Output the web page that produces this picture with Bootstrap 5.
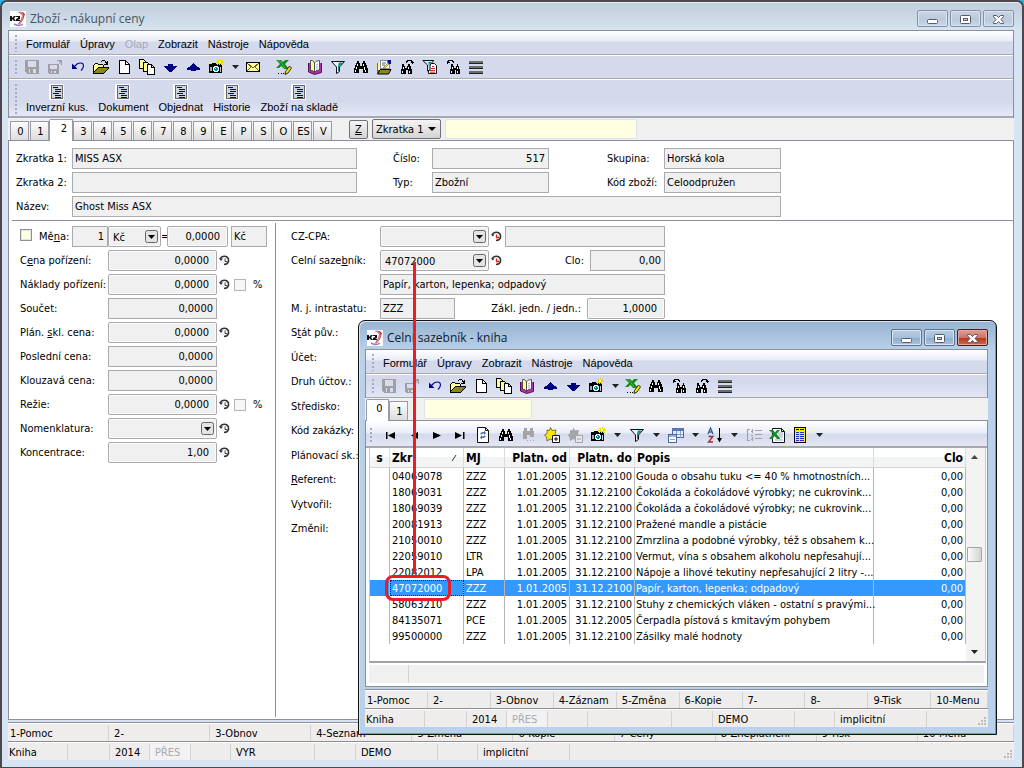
<!DOCTYPE html>
<html lang="cs">
<head>
<meta charset="utf-8">
<meta name="viewport" content="width=device-width, initial-scale=1">
<title>Zboží - nákupní ceny</title>
<link href="https://cdn.jsdelivr.net/npm/bootstrap@5.3.0/dist/css/bootstrap.min.css" rel="stylesheet">
<style>
:root{--ui:"DejaVu Sans Condensed","Noto Sans",sans-serif;--menu:"Liberation Sans",Arial,sans-serif;--cap:"Open Sans","Noto Sans",sans-serif;--bar:#d4d9ec;--line:#a9a9ad;--edge:#8e8e9a}
body{font:11px/14px var(--ui);color:#000;background:#21b4e8}
button,input,select{font:inherit;color:inherit}
.desk{min-height:100vh}
.win{border:1px solid #4d484d;border-radius:7px 7px 0 0}
.win-main{min-height:100vh;border-width:2px;border-bottom-width:1px;padding:0 8px 7px 6px;background:linear-gradient(#bfcddb 0,#d7e5f2 30px,#d7e5f2 100%);box-shadow:inset 0 1px #e8eef5}
.win-book{left:358px;top:320px;right:27px;bottom:33px;border-color:#111;background:linear-gradient(#98b4d1 0,#b9d1ea 30px,#b9d1ea 100%);box-shadow:inset 1px 1px #d4e6f5,inset -1px -1px #35b8d8;padding:0 8px 7px 6px}
.title-row{font:12px/16px var(--cap);height:28px;padding:6px 0 0 2px;color:#4a5560;gap:4px}
.win-book .title-row{color:#10202e}
.wbtns{gap:2px;margin-bottom:2px}
.wbtn{width:31px;height:17px;padding:0;border:1px solid #8391ab;border-radius:2px;background:linear-gradient(#c9d6e6,#bccbdb 50%,#b9c8da 51%,#c8d8e8);box-shadow:inset 0 0 0 1px #d9e4ef}
.win-book .wbtn{border-color:#5b7291;background:linear-gradient(#b8cce0,#a6bfda 50%,#8eacca 51%,#a9c4de)}
.win-book .wbtn.shut{border-color:#541a1a;background:linear-gradient(#dfa097,#cf7365 50%,#b5341d 51%,#cc6a50);box-shadow:inset 0 0 0 1px #e0a79c}
.wbtn svg{width:13px;height:11px;margin:2px auto 0}
.frame-in{border:1px solid var(--edge);border-bottom:0}
.mbar{height:24px;border-bottom:1px solid var(--line);background:linear-gradient(#fff 0,#e8ecf6 10px,var(--bar) 11px);font:11px/14px var(--menu);padding-left:6px}
.mbar a{color:#000;text-decoration:none;margin-left:10px;padding-top:2px}
.mbar a:first-of-type{margin-left:9px}
.mbar a.off{color:#a5a9b8}
.grip{width:2px;align-self:stretch;margin:4px 0 2px;background:repeating-linear-gradient(#a8adbd 0 2px,transparent 2px 4px);flex:none}
.tbar{height:24px;border-top:1px solid #fff;border-bottom:1px solid var(--line);background:var(--bar);padding-left:6px}
.tbar.soft{background:linear-gradient(var(--bar) 30%,#e1e6f5)}
.tbar.glass{border-top:0;border-bottom-width:2px;height:27px;background:linear-gradient(#fff,#e9edf7 12px,var(--bar) 13px,#e3e7f5);padding:3px 0 0 4px}
.tb{width:23px;height:20px;padding:0;border:0;background:none;flex:none}
.tb svg{width:16px;height:16px;display:block;margin:0 4px 0 3px}
.dd{width:14px}.glass .dd{width:16px}
.dd svg{width:7px;height:4px;margin:0 4px}
.bigbar{height:39px;border-top:1px solid #fff;border-bottom:2px solid #a7a7b5;background:linear-gradient(var(--bar) 60%,#e4e8f6);padding-left:6px}
.bigb{border:0;background:none;padding:2px 0 0;margin-left:10px;font:11px/14px var(--menu);text-align:center}
.bigb:first-of-type{margin-left:9px}
.bigb svg{width:16px;height:16px;display:block;margin:0 auto}
.strip{height:22px;background:#f0f0f0;padding-left:2px}
.tabb{width:19px;height:19px;border:1px solid #9a9aa6;border-bottom:0;background:linear-gradient(#fdfdfd,#dcdcdc);padding:2px 0 0 2px;margin-right:1px;line-height:14px}
.tabb.on{width:24px;height:22px;background:#fff;margin:0 0 -1px -1px;border-top-left-radius:2px;padding:0 0 3px 6px;z-index:1}
.strip-book .tabb.on{width:23px;padding-left:4px}
.zbtn{width:19px;height:19px;border:1px solid #707078;border-radius:2px;background:linear-gradient(#f4f4f4,#d4d4d4);padding:1px 0 0;line-height:14px}
.zsel{height:20px;width:69px;border:1px solid #707078;border-radius:2px;appearance:none;padding:2px 0 0 3px;background:url("data:image/svg+xml,%3Csvg xmlns='http://www.w3.org/2000/svg' width='8' height='4'%3E%3Cpath d='M0 0h8L4 4z'/%3E%3C/svg%3E") no-repeat right 4px center,linear-gradient(#f4f4f4,#d4d4d4)}
.find{height:20px;border:1px solid #dfe1ee;border-radius:2px;background:#ffffe1;padding:0 3px}
.sheet{background:#fff;border:1px solid var(--edge)}
.fld{height:21px;min-width:0;border:1px solid #a9abb0;background:#f0f0f0;padding:0 2px 1px;border-radius:0;display:block}
.fld.r{text-align:right;padding-right:3px}
.fld.in{border-radius:2px;box-shadow:inset 0 0 0 1px #fbfbfb}
.fld.in.r{padding-right:7px}
.fld.combo{appearance:none;padding:2px 2px 0 4px;background:#f0f0f0 url("data:image/svg+xml,%3Csvg xmlns='http://www.w3.org/2000/svg' width='13' height='13'%3E%3Crect x='.5' y='.5' width='12' height='12' rx='2' fill='%23e4e4e4' stroke='%23666'/%3E%3Cpath d='M3 5h7L6.500 9z'/%3E%3C/svg%3E") no-repeat right 2px center}
.head-form{display:grid;grid-template-columns:56px 285px 75px 117px 115px 117px;row-gap:3px;padding:7px 7px 3px;align-items:center}
.head-form .l2{padding-left:36px}.head-form .l3{padding-left:58px}
.rule{height:1px;background:var(--edge);margin:0 0 0 3px}
.cols{flex:1}
.colL{width:267px;border-right:1px solid var(--edge);margin:2px 0 2px;padding:3px 0 0 11px}
.fr{display:flex;align-items:center;height:21px;margin-bottom:3px}
.colL .fr>label:first-child{width:88px}
.w109{width:109px!important}
.clk{width:11px;height:11px;margin:0 2px;flex:none}
.cb{appearance:none;width:12px;height:12px;border:1px solid #b4b4b4;background:#f6f6f6;margin:0 7px 0 2px;flex:none}
.cb.lit{border-color:#8d9096;background:#ffffe1;box-shadow:inset 0 0 0 1px #e4e4e4;margin:0 7px 3px 0}
.colR{padding:5px 0 0 15px;flex:1}
.colR .fr>label:first-child{width:89px}
.colR .fr:nth-child(odd):nth-child(n+5){margin-bottom:4px}
.stat{background:#efecec;border-top:1px solid var(--edge);height:19px;box-shadow:inset 0 1px #fff;padding-top:2px}
.stat.first{margin-top:2px}
.stat>span{border-right:1px solid #d2d2d2;padding-left:5px;white-space:nowrap;flex:none;line-height:17px}
.stat>span:first-child{padding-left:1px}
.stat.keys>span{flex:0 0 10.05%}
.win-book .stat.keys>span{flex-basis:10.1%}
.stat.keys>span:last-child{flex:1 0 0!important}
.stat.keys>span:first-child{padding-left:2px}
.a40{width:40px}.a41{width:41px}.a42{width:42px}.a60{width:60px}.a84{width:84px}.a82{width:82px}.a92{width:92px}
.stat .off{color:#a9a9ae;background:#f2f2f2}
.sz{width:9px;height:9px;margin:auto 1px 1px auto}
.grid-box{margin:0 1px 0 3px;border:1px solid #c9c9cf;border-top:0;border-bottom:2px solid #a2a2aa;flex:1;background:#fff}
.book{width:100%;table-layout:fixed;border-collapse:separate;border-spacing:0}
.book th{height:20px;font-weight:700;font-size:12px;padding:2px 2px 0;line-height:17px;border-right:1px solid #dcdce0;background:linear-gradient(#fff 45%,#f3f4f6 50%);border-bottom:1px solid #d5d5d5;white-space:nowrap;overflow:hidden}
.book td{height:16px;line-height:14px;padding:2px 2px 0;border-right:1px solid #b5b5b5;white-space:nowrap}
.book td:nth-child(6){padding:2px 0 0 1px}
.book .sel td{background:#39f;color:#fff}
.book .sel td:nth-child(2){outline:1px dotted #222;outline-offset:-1px}
.num{text-align:right}
.sbar{width:19px;background:#f3f3f3;flex:none}
.sbar i{display:block;width:15px;height:15px;margin:0 2px 0 1px;border:1px solid #a5a5a5;border-radius:1px;background:linear-gradient(90deg,#fafafa,#d4d4d4)}
.sbar svg{width:7px;height:4px;margin:7px 6px 7px 5px}
.foot{height:18px;margin:2px 3px 3px;background:#f0f0f0}
.foot span{display:block;width:40px;height:18px;border-right:1px solid #d2d2d2}
.redline{left:413px;top:262px;width:3px;height:312px;background:#ed1c24}
.redbox{left:385px;top:575px;width:66px;height:26px;border:3px solid #ed1c24;border-radius:8px}
</style>
</head>
<body>
<svg width="0" height="0" class="position-absolute" aria-hidden="true">
<defs>
<symbol id="logo" viewBox="0 0 16 16"><path fill="#fff" d="M0 0h16v16H0z"/><path d="M7 1q6-1 8 2-1 5-4 9-2 2-3 1 4-5 4-9-2-3-5-3z" fill="#b03050"/><path d="M10 1q3 1 3 4-1 6-5 10" fill="none" stroke="#e8a47c"/><path d="M4 13q5 3 9 0" fill="none" stroke="#9c7abc" stroke-width="1.500"/><path d="M0 5h2v2l2-2h2L4 7.500 6 10H4L2 8v2H0zM6 5h4v3l-2 1h2v1H6V8l2-1V6H6z" fill="#111"/></symbol>
<symbol id="save" viewBox="0 0 16 16" shape-rendering="crispEdges"><path d="M1 1h14v14H3l-2-2z" fill="#a0a0a4"/><path d="M4 2h8v6H4zM5 10h7v4H5z" fill="#d8dced"/><path d="M6 10h3v4H6zM13 2h1v1h-1z" fill="#a0a0a4"/></symbol>
<symbol id="saveas" viewBox="0 0 16 16" shape-rendering="crispEdges"><path d="M1 5h11v10H2l-1-1z" fill="#a0a0a4"/><path d="M3 6h7v4H3zM4 12h5v2H4z" fill="#d8dced"/><path d="M5 12h2v2H5z" fill="#a0a0a4"/><path d="M10 1h5v5h-1V4h-1v1h-1v1h-1V5h1V4h1V3h-1V2h-2z" fill="#a0a0a4"/></symbol>
<symbol id="undo" viewBox="0 0 16 16"><path d="M3.500 8.500L7 5q4-2 6 0 1.500 3-2 6.500" fill="none" stroke="#000090" stroke-width="1.100"/><path d="M2 4.500V10h5.500z" fill="#000090"/></symbol>
<symbol id="open" viewBox="0 0 16 16" shape-rendering="crispEdges"><path d="M1 6h1V5h3v1h5v3H5l-4 5z" fill="#ff9"/><path d="M5 9h10l-4 5H1z" fill="#8a8812"/><path d="M1 5h1V4h3v1h5v1h1v2h-1V6H5V5H2v1H1zM0 6h1v6H0zM5 8h11v1H5zM4 9h1v1H4zM3 10h1v1H3zM2 11h1v1H2zM1 12h1v1H1zM0 12h1v3H0zM1 14h10v1H1zM15 9h1v1h-1zM14 10h1v1h-1zM13 11h1v1h-1zM12 12h1v1h-1zM11 13h1v1h-1zM8 2h1v1H8zM9 1h3v1H9zM12 2h1v1h-1zM14 2h1v4h-4V5h2V4h-1V3h2z"/></symbol>
<symbol id="new" viewBox="0 0 16 16" shape-rendering="crispEdges"><path d="M3.500 1.500h6l4 4v9h-10z" fill="#fff" stroke="#000"/><path d="M9.500 1.500v4h4" fill="none" stroke="#000"/></symbol>
<symbol id="copies" viewBox="0 0 16 16" shape-rendering="crispEdges"><g stroke="#000"><path d="M.500.500h4l3 3v6h-7z" fill="#ff9"/><path d="M4.500 3.500h4l3 3v6h-7z" fill="#ff9"/><path d="M8.500 5.500h4l3 3v7h-7z" fill="#fff"/><path d="M12.500 5.500v3h3" fill="none"/></g></symbol>
<symbol id="down" viewBox="0 0 16 16" shape-rendering="crispEdges"><path d="M6 5h5v2h4v1h-1v1h-1v1h-1v1h-1v1h-1v1H7v-1H6v-1H5v-1H4V9H3V8H2V7h4z" fill="#000080"/></symbol>
<symbol id="up" viewBox="0 0 16 16" shape-rendering="crispEdges"><path d="M8 4h1v1h1v1h1v1h1v1h2v1h1v2h-4v1H6v-1H2V9h1V8h2V7h1V6h1V5h1z" fill="#000080"/></symbol>
<symbol id="camera" viewBox="0 0 16 16" shape-rendering="crispEdges"><path d="M1 5h3V4h4v1h6v9H1z"/><path d="M2 8h2v4H2z" fill="#a8a8b0"/><path d="M12 8h1v5h-1z" fill="#ccc"/><path d="M6 7h4v1h1v4h-1v1H6v-1H5V8h1z" fill="#dff"/><path d="M7 8h2v1h1v2H9v1H7v-1H6V9h1z" fill="#088"/><path d="M7 9h1v1H7z" fill="#fff"/><path d="M12 0h1v2l2-1v1l-1 1h2v1h-2l1 2h-1l-2-1v1h-1V5L9 6V5l1-1H8V3h2L9 1l3 1z" fill="#e8d800"/><path d="M11 2h2v2h-2z" fill="#ffa"/></symbol>
<symbol id="caret" viewBox="0 0 7 4"><path d="M0 0h7L3.500 4z" fill="#222"/></symbol>
<symbol id="mail" viewBox="0 0 16 16" shape-rendering="crispEdges"><path d="M1.500 3.500h13v9h-13z" fill="#ff9" stroke="#000"/><path d="M2 4l6 5 6-5M2 12l4-4m4 0l4 4" fill="none" stroke="#665f20"/></symbol>
<symbol id="xls" viewBox="0 0 16 16"><path d="M0 1h5l2 2 2-2h4L9 5l4 5H8L5.500 7 3 9H0l4-4z" fill="#138a1c"/><path d="M1 2h3l5 7" fill="none" stroke="#5fc85f" stroke-width=".7"/><path d="M13.500 7l2 2-3.500 5-3 1.500.5-3z" fill="#f4e400" stroke="#000" stroke-width=".8"/><path d="M2 14h1v1H2zm3 0h1v1H5zm2 0h1v1H7z"/></symbol>
<symbol id="bookico" viewBox="0 0 16 16"><path d="M1.500 4v9l6 2.500 7-2V4" fill="#b030b0" stroke="#600860"/><path d="M3.500 1.500h2l2 2.500v9.500l-2-2h-2z" fill="#ff9" stroke="#333" stroke-width=".8"/><path d="M7.500 4q1-2.500 5-2.500v9.500q-4 0-5 2.500z" fill="#fff" stroke="#333" stroke-width=".8"/><path d="M9 6l2-1M9 8l2-1M9 10l2-1" stroke="#888" stroke-width=".7"/></symbol>
<symbol id="filter" viewBox="0 0 16 16"><path d="M1.500 2.500h13L9.500 8v4.500l-3 2V8z" fill="#e6f4f4" stroke="#111"/><path d="M9 3.500h4L9 7.500V12H8V7z" fill="#0b8a8a"/></symbol>
<symbol id="bin" viewBox="0 0 16 16" shape-rendering="crispEdges"><path d="M4 2h2v2h1v3h2V4h1V2h2v2h1v2h1v3h1v5h-5v-4H6v4H1V9h1V6h1V4h1z"/><path d="M4 5h1v2H4zM3 8h1v2H3zM2 11h1v2H2zM10 5h1v2h-1zM11 8h1v3h-1zM12 11h1v2h-1z" fill="#fff"/></symbol>
<symbol id="binoff" viewBox="0 0 16 16" shape-rendering="crispEdges"><path d="M3 1h3v3h3V1h3v3h1v6H9V8H6v4H2V4h1zM6 13h1v1H6zm3 0h1v1H9zm3 0h1v1h-1z" fill="#a4a4a8"/></symbol>
<symbol id="binnext" viewBox="0 0 16 16" shape-rendering="crispEdges"><path d="M3 5h2v2h1v2h2V7h1V5h2v2h1v3h1v5H9v-4H7v4H2v-5h1z"/><path d="M4 8h1v2H4zM3 12h1v2H3zM9 8h1v2H9zM10 12h1v2h-1z" fill="#fff"/><path d="M7.500 3.500v-1h1v-1h4v1h1v2m-2-1h3" fill="none" stroke="#000"/></symbol>
<symbol id="binprev" viewBox="0 0 16 16" shape-rendering="crispEdges"><path d="M6 5h2v2h1v2h2V7h1V5h1v2h1v3h1v5h-4v-4h-1v4H5v-5h1z"/><path d="M7 8h1v2H7zM6 12h1v2H6zM12 8h1v2h-1zM12 12h1v2h-1z" fill="#fff"/><path d="M8.500 3.500v-1h-1v-1h-4v1h-1v2m-1-1h3" fill="none" stroke="#000"/></symbol>
<symbol id="notes" viewBox="0 0 16 16"><path d="M2 4v10" fill="none" stroke="#000"/><path d="M4.500 1.500h9v8h-9z" fill="#fff" stroke="#333" stroke-dasharray="1 1"/><path d="M1.500 15l2.500-4.500h11L12.500 15z" fill="#8a8812" stroke="#000"/><path d="M2 4h2v7H2z" fill="#ff7"/><path d="M6 4h4M6 6h3" stroke="#36a"/><path d="M7 9l5-5 1 1-4 4z" fill="#f4e400" stroke="#552" stroke-width=".5"/><path d="M12 1h3v4h-2l-2-2z" fill="#0a0a9a"/></symbol>
<symbol id="filterdoc" viewBox="0 0 16 16"><path d="M8.500 4.500h4l2 2v8h-8v-5z" fill="#fff" stroke="#111"/><path d="M9 9.500h4M8 11.500h5M8 13.200h5M10 7.500h2" stroke="#d22"/><path d="M.800 1.500h11L8 6v5l-2.500 1V6z" fill="#cfeeee" stroke="#111"/><path d="M6.500 3h3.500L7 6v4z" fill="#0b8a8a"/></symbol>
<symbol id="lines" viewBox="0 0 16 16" shape-rendering="crispEdges"><path d="M1 2h14v2H1zM1 7h14v2H1zM1 12h14v2H1z" fill="#6c6c6c"/><path d="M1 4h14v1H1zM1 9h14v1H1zM1 14h14v1H1z" fill="#222"/></symbol>
<symbol id="listdoc" viewBox="0 0 16 16" shape-rendering="crispEdges"><path d="M0 0h15v16H0z" fill="#fff"/><path d="M2.500 1.500h11v13h-11z" fill="#d0d4dc" stroke="#666"/><path d="M4 3h5v1H4zM6 5h6v1H6zM6 7h6v1H6zM4 9h6v1H4zM6 11h6v1H6zM6 13h6v1H6z" fill="#000080"/></symbol>
<symbol id="first" viewBox="0 0 16 16"><path d="M3 5h1.500v7H3zM12 5v7L5 8.500z"/></symbol>
<symbol id="prev" viewBox="0 0 16 16"><path d="M12 5v7L5 8.500z"/></symbol>
<symbol id="play" viewBox="0 0 16 16"><path d="M4 5v7l8-3.500z"/></symbol>
<symbol id="last" viewBox="0 0 16 16"><path d="M3 5v7l7-3.500zM11 5h1.500v7H11z"/></symbol>
<symbol id="refresh" viewBox="0 0 16 16"><path d="M2.500.500h8l3 3v12h-11z" fill="#fff" stroke="#111"/><path d="M10.500.500v3h3" fill="none" stroke="#111"/><path d="M5 7q1-2.500 4-2l0-1.500 2 2.500-2 2V6.500q-2 0-2.500 1zM11 9q-1 2.500-4 2V12.500L5 10.500 7 8v1.500q2 0 2.500-1z" fill="#4a6ea0"/></symbol>
<symbol id="star" viewBox="0 0 16 16"><path d="M6.500.5l1.500 3 4-.5-1 4 1 3-3 3-3-1-3 2-.5-4-2-2 2.500-1.500L3 3l2.500.5z" fill="#ffe800" stroke="#554" stroke-width=".8"/><path d="M8.500 8.500h7v7h-7z" fill="#fff" stroke="#111"/><path d="M10 12h4M12 10v4" stroke="#111"/></symbol>
<symbol id="staroff" viewBox="0 0 16 16"><path d="M6.500.5l1.500 3 4-.5-1 4 1 3-3 3-3-1-3 2-.5-4-2-2 2.500-1.500L3 3l2.500.5z" fill="#a4a4a8"/><path d="M8.500 8.500h7v7h-7z" fill="#e6e8f0" stroke="#a4a4a8"/><path d="M10 12h4" stroke="#a4a4a8"/></symbol>
<symbol id="forms" viewBox="0 0 16 16" shape-rendering="crispEdges"><path d="M4.500 1.500h11v9h-11z" fill="#e4ecfa" stroke="#4a66a0"/><path d="M4 1h12v3H4z" fill="#5878b4"/><path d="M8 4v7M12 4v7M5 7h10" stroke="#8aa0cc"/><path d="M.500 7.500h8v8h-8z" fill="#fff" stroke="#4a66a0"/><path d="M1 8h7v2H1z" fill="#9ab0d8"/><path d="M2 12.500h5" stroke="#8aa0cc"/></symbol>
<symbol id="az" viewBox="0 0 16 16"><path d="M1 7l2.500-6L6 7M2 5h3" fill="none" stroke="#2f5f9f" stroke-width="1.300"/><path d="M1.500 9.500H6L1.500 15H6" fill="none" stroke="#9c2f2f" stroke-width="1.300"/><path d="M12.500 1v12" stroke="#000"/><path d="M10 11h5l-2.500 4.500z"/></symbol>
<symbol id="tree" viewBox="0 0 16 16"><path d="M4 2.500H1.500v11H4M5 4.500h2M5 8.500h2M5 12.500h2M9 3.500h7M9 7.500h7M9 11.500h7M6.500 2v4M6.500 10v4" fill="none" stroke="#a4a4a8" stroke-width="1.200"/></symbol>
<symbol id="xlsdoc" viewBox="0 0 16 16"><path d="M3.500 1.500h9l3 3v11h-12z" fill="#fff" stroke="#111"/><path d="M12.500 1.500v3h3" fill="none" stroke="#111"/><path d="M9 6h5M9 8h5M9 10h5M6 13h8" stroke="#9ab"/><path d="M0 3h4l2 2.500L8 3h3L7.500 7l4 5H8L5.500 9 3.500 12H0l4-5z" fill="#178a2a"/></symbol>
<symbol id="ylist" viewBox="0 0 16 16" shape-rendering="crispEdges"><path d="M2.500.500h11v15h-11z" fill="#ffee10" stroke="#000"/><path d="M4 2h3v1H4zM8 2h4v1H8z"/><path d="M4 5h3v1H4zM4 7h3v1H4zM4 9h3v1H4zM4 11h3v1H4zM4 13h3v1H4zM8 5h4v1H8zM8 7h4v1H8zM8 9h4v1H8zM8 11h4v1H8zM8 13h4v1H8z" fill="#2030c0"/></symbol>
<symbol id="clock" viewBox="0 0 11 11"><path d="M1 4q2-3.500 6-2.500 3 1 2.500 5-1 3-4.500 3" fill="none" stroke="#333" stroke-width="1.500"/><path d="M0 3.500h4L2 6z" fill="#333"/><path d="M6 3.500v3h2.500" fill="none" stroke="#444"/></symbol>
<symbol id="clockred" viewBox="0 0 11 11"><path d="M1 4q2-3.500 6-2.500 3 1 2.500 5-1 3-4.500 3" fill="none" stroke="#333" stroke-width="1.500"/><path d="M0 3.500h3.500L2 5.500z" fill="#333"/><path d="M5.500 3.500v3h3" fill="none" stroke="#e02020" stroke-width="1.300"/></symbol>
<symbol id="wmin" viewBox="0 0 13 11"><rect x="1.500" y="5.500" width="10" height="4" rx="1" fill="#fff" stroke="#555a6c"/></symbol>
<symbol id="wmax" viewBox="0 0 13 11"><rect x="1.500" y="1.500" width="10" height="8" rx="1" fill="#fff" stroke="#555a6c"/><rect x="4.500" y="4.500" width="4" height="2" fill="#cfd8e4" stroke="#555a6c"/></symbol>
<symbol id="wx" viewBox="0 0 13 11"><path d="M1.500 1.500h3l2 2 2-2h3v1.200L9 5.500l2.500 2.800v1.200h-3l-2-2-2 2h-3V8.300L4 5.500 1.500 2.700z" fill="#fff" stroke="#555a6c"/></symbol>
<symbol id="arup" viewBox="0 0 7 4"><path d="M0 4h7L3.500 0z" fill="#444"/></symbol>
<symbol id="sizer" viewBox="0 0 9 9" shape-rendering="crispEdges"><path d="M6 0h2v2H6zM6 3h2v2H6zM3 3h2v2H3zM0 6h2v2H0zM3 6h2v2H3zM6 6h2v2H6z" fill="#c0bcbc"/></symbol>
</defs>
</svg>
<main class="desk position-relative">
<section class="win win-main d-flex flex-column" aria-label="Zboží">
  <header class="title-row d-flex align-items-center">
    <svg width="16" height="16"><use href="#logo"/></svg><span class="flex-grow-1">Zboží - nákupní ceny</span>
    <div class="wbtns d-flex">
      <button class="wbtn" aria-label="Minimalizovat"><svg class="d-block"><use href="#wmin"/></svg></button>
      <button class="wbtn" aria-label="Maximalizovat"><svg class="d-block"><use href="#wmax"/></svg></button>
      <button class="wbtn" aria-label="Zavřít"><svg class="d-block"><use href="#wx"/></svg></button>
    </div>
  </header>
  <div class="frame-in">
    <nav class="mbar d-flex align-items-center"><span class="grip"></span><a href="#">Formulář</a><a href="#">Úpravy</a><a href="#" class="off">Olap</a><a href="#">Zobrazit</a><a href="#">Nástroje</a><a href="#">Nápověda</a></nav>
    <div class="tbar d-flex align-items-center"><span class="grip me-1"></span>
      <button class="tb"><svg><use href="#save"/></svg></button><button class="tb"><svg><use href="#saveas"/></svg></button><button class="tb"><svg><use href="#undo"/></svg></button><button class="tb"><svg><use href="#open"/></svg></button><button class="tb"><svg><use href="#new"/></svg></button><button class="tb"><svg><use href="#copies"/></svg></button><button class="tb"><svg><use href="#down"/></svg></button><button class="tb"><svg><use href="#up"/></svg></button><button class="tb"><svg><use href="#camera"/></svg></button><button class="tb dd"><svg><use href="#caret"/></svg></button><button class="tb me-2"><svg><use href="#mail"/></svg></button><button class="tb me-2"><svg><use href="#xls"/></svg></button><button class="tb"><svg><use href="#bookico"/></svg></button><button class="tb"><svg><use href="#filter"/></svg></button><button class="tb"><svg><use href="#bin"/></svg></button><button class="tb"><svg><use href="#notes"/></svg></button><button class="tb"><svg><use href="#binnext"/></svg></button><button class="tb"><svg><use href="#filterdoc"/></svg></button><button class="tb"><svg><use href="#binprev"/></svg></button><button class="tb"><svg><use href="#lines"/></svg></button>
    </div>
    <div class="bigbar d-flex align-items-center"><span class="grip"></span>
      <button class="bigb"><svg><use href="#listdoc"/></svg>Inverzní kus.</button><button class="bigb"><svg><use href="#listdoc"/></svg>Dokument</button><button class="bigb"><svg><use href="#listdoc"/></svg>Objednat</button><button class="bigb"><svg><use href="#listdoc"/></svg>Historie</button><button class="bigb"><svg><use href="#listdoc"/></svg>Zboží na skladě</button>
    </div>
  </div>
  <div class="strip d-flex align-items-end">
    <button class="tabb">0</button><button class="tabb">1</button><button class="tabb on">2</button><button class="tabb">3</button><button class="tabb">4</button><button class="tabb">5</button><button class="tabb">6</button><button class="tabb">7</button><button class="tabb">8</button><button class="tabb">9</button><button class="tabb">E</button><button class="tabb">P</button><button class="tabb">S</button><button class="tabb">O</button><button class="tabb">ES</button><button class="tabb">V</button>
    <div class="d-flex align-items-center align-self-center ms-3"><button class="zbtn me-1"><u>Z</u></button><select class="zsel me-1" aria-label="Klíč"><option>Zkratka 1</option></select><input class="find" style="width:192px" aria-label="Hledat"></div>
  </div>
  <div class="sheet flex-grow-1 d-flex flex-column">
    <div class="head-form">
      <label for="z1">Zkratka 1:</label><input id="z1" class="fld" value="MISS ASX" readonly><label for="ci" class="l2">Číslo:</label><input id="ci" class="fld r" value="517" readonly><label for="sk" class="l3">Skupina:</label><input id="sk" class="fld" value="Horská kola" readonly>
      <label for="z2">Zkratka 2:</label><input id="z2" class="fld" readonly><label for="ty" class="l2">Typ:</label><input id="ty" class="fld" value="Zbožní" readonly><label for="kz" class="l3">Kód zboží:</label><input id="kz" class="fld" value="Celoodpružen" readonly>
      <label for="nz">Název:</label><input id="nz" class="fld" style="grid-column:2/-1" value="Ghost Miss ASX" readonly>
    </div>
    <div class="rule"></div>
    <div class="cols d-flex">
      <div class="colL">
        <div class="fr"><input type="checkbox" class="cb lit" id="me"><label for="me" style="width:33px">Mě<u>n</u>a:</label><input class="fld r" style="width:36px" value="1" aria-label="Množství"><select class="fld in combo" style="width:53px" aria-label="Měna"><option>Kč</option></select><span class="text-center" style="width:6px">=</span><input class="fld in r" style="width:61px" value="0,0000" aria-label="Kurz"><input class="fld" style="width:36px;margin-left:3px" value="Kč" aria-label="Měna kurzu"></div>
        <div class="fr"><label for="l1">C<u>e</u>na pořízení:</label><input id="l1" class="fld in r w109" value="0,0000"><svg class="clk"><use href="#clock"/></svg></div>
        <div class="fr"><label for="l2">Náklady pořízení:</label><input id="l2" class="fld in r w109" value="0,0000"><svg class="clk"><use href="#clock"/></svg><input type="checkbox" class="cb" id="p1"><label for="p1">%</label></div>
        <div class="fr"><label for="l3">Součet:</label><input id="l3" class="fld r w109" value="0,0000"></div>
        <div class="fr"><label for="l4">Plán. <u>s</u>kl. cena:</label><input id="l4" class="fld in r w109" value="0,0000"><svg class="clk"><use href="#clock"/></svg></div>
        <div class="fr"><label for="l5">Poslední cena:</label><input id="l5" class="fld r w109" value="0,0000"></div>
        <div class="fr"><label for="l6">Klouzavá cena:</label><input id="l6" class="fld r w109" value="0,0000"></div>
        <div class="fr"><label for="l7">Režie:</label><input id="l7" class="fld in r w109" value="0,0000"><svg class="clk"><use href="#clock"/></svg><input type="checkbox" class="cb" id="p2"><label for="p2">%</label></div>
        <div class="fr"><label for="l8">Nomenklatura:</label><select id="l8" class="fld in combo w109"><option></option></select><svg class="clk"><use href="#clock"/></svg></div>
        <div class="fr"><label for="l9">Koncentrace:</label><input id="l9" class="fld in r w109" value="1,00"><svg class="clk"><use href="#clock"/></svg></div>
      </div>
      <div class="colR">
        <div class="fr"><label for="r1">CZ-CPA:</label><select id="r1" class="fld in combo w109"><option></option></select><svg class="clk"><use href="#clockred"/></svg><input class="fld" style="width:160px;margin-left:1px" aria-label="Popis CZ-CPA" readonly></div>
        <div class="fr"><label for="r2">Celní saze<u>b</u>ník:</label><select id="r2" class="fld in combo w109"><option>47072000</option></select><svg class="clk"><use href="#clockred"/></svg><label for="clo" class="text-end" style="width:86px;padding-right:6px">Clo:</label><input id="clo" class="fld r" style="width:75px" value="0,00" readonly></div>
        <div class="fr"><label for="r3"></label><input id="r3" class="fld" style="width:285px" value="Papír, karton, lepenka; odpadový" aria-label="Popis sazebníku" readonly></div>
        <div class="fr"><label for="r4">M. j. intrastatu:</label><input id="r4" class="fld" style="width:75px" value="ZZZ" readonly><label for="r5" class="text-end" style="width:132px;padding-right:6px">Zákl. jedn. / jedn.:</label><input id="r5" class="fld in r" style="width:78px" value="1,0000"></div>
        <div class="fr"><span>S<u>t</u>át pův.:</span></div>
        <div class="fr"><span>Účet:</span></div>
        <div class="fr"><span>Druh účtov.:</span></div>
        <div class="fr"><span>Středisko:</span></div>
        <div class="fr"><span>Kód zakázky:</span></div>
        <div class="fr"><span>Plánovací sk.:</span></div>
        <div class="fr"><span><u>R</u>eferent:</span></div>
        <div class="fr"><span>Vytvořil:</span></div>
        <div class="fr"><span>Změnil:</span></div>
      </div>
    </div>
  </div>
  <div class="stat first keys d-flex"><span>1-Pomoc</span><span>2-</span><span>3-Obnov</span><span>4-Seznam</span><span>5-Změna</span><span>6-Kopie</span><span>7-Ceny</span><span>8-Zneplatnění</span><span>9-Tisk</span><span>10-Menu</span></div>
  <div class="stat d-flex"><span class="a60">Kniha</span><span class="a42"></span><span class="a40">2014</span><span class="a41 off">PŘES</span><span class="a40"></span><span class="a84">VYR</span><span class="a41"></span><span class="a82">DEMO</span><span class="a40"></span><span class="a92">implicitní</span><svg class="sz"><use href="#sizer"/></svg></div>
</section>

<section class="win win-book position-absolute d-flex flex-column" aria-label="Celní sazebník">
  <header class="title-row d-flex align-items-center">
    <svg width="16" height="16"><use href="#logo"/></svg><span class="flex-grow-1">Celní sazebník - kniha</span>
    <div class="wbtns d-flex">
      <button class="wbtn" aria-label="Minimalizovat"><svg class="d-block"><use href="#wmin"/></svg></button>
      <button class="wbtn" aria-label="Maximalizovat"><svg class="d-block"><use href="#wmax"/></svg></button>
      <button class="wbtn shut" aria-label="Zavřít"><svg class="d-block"><use href="#wx"/></svg></button>
    </div>
  </header>
  <div class="frame-in">
    <nav class="mbar d-flex align-items-center"><span class="grip"></span><a href="#">Formulář</a><a href="#">Úpravy</a><a href="#">Zobrazit</a><a href="#">Nástroje</a><a href="#">Nápověda</a></nav>
    <div class="tbar soft d-flex align-items-center"><span class="grip me-1"></span>
      <button class="tb"><svg><use href="#save"/></svg></button><button class="tb"><svg><use href="#saveas"/></svg></button><button class="tb"><svg><use href="#undo"/></svg></button><button class="tb"><svg><use href="#open"/></svg></button><button class="tb"><svg><use href="#new"/></svg></button><button class="tb"><svg><use href="#copies"/></svg></button><button class="tb"><svg><use href="#bookico"/></svg></button><button class="tb"><svg><use href="#up"/></svg></button><button class="tb"><svg><use href="#down"/></svg></button><button class="tb"><svg><use href="#camera"/></svg></button><button class="tb dd"><svg><use href="#caret"/></svg></button><button class="tb"><svg><use href="#xls"/></svg></button><button class="tb"><svg><use href="#bin"/></svg></button><button class="tb"><svg><use href="#binprev"/></svg></button><button class="tb"><svg><use href="#binnext"/></svg></button><button class="tb"><svg><use href="#lines"/></svg></button>
    </div>
  </div>
  <div class="strip strip-book d-flex align-items-end">
    <button class="tabb on">0</button><button class="tabb">1</button><input class="find align-self-center" style="width:108px;margin-left:15px" aria-label="Hledat v knize">
  </div>
  <div class="sheet flex-grow-1 d-flex flex-column">
    <div class="tbar glass d-flex align-items-center"><span class="grip me-2"></span>
      <button class="tb"><svg><use href="#first"/></svg></button><button class="tb"><svg><use href="#prev"/></svg></button><button class="tb"><svg><use href="#play"/></svg></button><button class="tb"><svg><use href="#last"/></svg></button><button class="tb"><svg><use href="#refresh"/></svg></button><button class="tb"><svg><use href="#bin"/></svg></button><button class="tb"><svg><use href="#binoff"/></svg></button><button class="tb"><svg><use href="#star"/></svg></button><button class="tb"><svg><use href="#staroff"/></svg></button><button class="tb"><svg><use href="#camera"/></svg></button><button class="tb dd"><svg><use href="#caret"/></svg></button><button class="tb"><svg><use href="#filter"/></svg></button><button class="tb dd"><svg><use href="#caret"/></svg></button><button class="tb"><svg><use href="#forms"/></svg></button><button class="tb dd"><svg><use href="#caret"/></svg></button><button class="tb"><svg><use href="#az"/></svg></button><button class="tb dd"><svg><use href="#caret"/></svg></button><button class="tb"><svg><use href="#tree"/></svg></button><button class="tb"><svg><use href="#xlsdoc"/></svg></button><button class="tb"><svg><use href="#ylist"/></svg></button><button class="tb dd"><svg><use href="#caret"/></svg></button>
    </div>
    <div class="grid-box d-flex">
      <div class="flex-grow-1">
      <table class="book">
        <colgroup><col style="width:20px"><col style="width:74px"><col style="width:41px"><col style="width:65px"><col style="width:65px"><col><col style="width:92px"></colgroup>
        <thead><tr><th class="text-center">s</th><th><span class="d-flex justify-content-between">Zkr<svg width="6" height="8" class="mt-1 me-1"><path d="M1 7l4-6" stroke="#333"/></svg></span></th><th>MJ</th><th class="num">Platn. od</th><th class="num">Platn. do</th><th>Popis</th><th class="num">Clo</th></tr></thead>
        <tbody>
        <tr><td></td><td>04069078</td><td>ZZZ</td><td class="num">1.01.2005</td><td class="num">31.12.2100</td><td>Gouda o obsahu tuku &lt;= 40 % hmotnostních...</td><td class="num">0,00</td></tr>
        <tr><td></td><td>18069031</td><td>ZZZ</td><td class="num">1.01.2005</td><td class="num">31.12.2100</td><td>Čokoláda a čokoládové výrobky; ne cukrovink...</td><td class="num">0,00</td></tr>
        <tr><td></td><td>18069039</td><td>ZZZ</td><td class="num">1.01.2005</td><td class="num">31.12.2100</td><td>Čokoláda a čokoládové výrobky; ne cukrovink...</td><td class="num">0,00</td></tr>
        <tr><td></td><td>20081913</td><td>ZZZ</td><td class="num">1.01.2005</td><td class="num">31.12.2100</td><td>Pražené mandle a pistácie</td><td class="num">0,00</td></tr>
        <tr><td></td><td>21050010</td><td>ZZZ</td><td class="num">1.01.2005</td><td class="num">31.12.2100</td><td>Zmrzlina a podobné výrobky, též s obsahem k...</td><td class="num">0,00</td></tr>
        <tr><td></td><td>22059010</td><td>LTR</td><td class="num">1.01.2005</td><td class="num">31.12.2100</td><td>Vermut, vína s obsahem alkoholu nepřesahují...</td><td class="num">0,00</td></tr>
        <tr><td></td><td>22082012</td><td>LPA</td><td class="num">1.01.2005</td><td class="num">31.12.2100</td><td>Nápoje a lihové tekutiny nepřesahující 2 litry -...</td><td class="num">0,00</td></tr>
        <tr class="sel"><td></td><td>47072000</td><td>ZZZ</td><td class="num">1.01.2005</td><td class="num">31.12.2100</td><td>Papír, karton, lepenka; odpadový</td><td class="num">0,00</td></tr>
        <tr><td></td><td>58063210</td><td>ZZZ</td><td class="num">1.01.2005</td><td class="num">31.12.2100</td><td>Stuhy z chemických vláken - ostatní s pravými...</td><td class="num">0,00</td></tr>
        <tr><td></td><td>84135071</td><td>PCE</td><td class="num">1.01.2005</td><td class="num">31.12.2005</td><td>Čerpadla pístová s kmitavým pohybem</td><td class="num">0,00</td></tr>
        <tr><td></td><td>99500000</td><td>ZZZ</td><td class="num">1.01.2005</td><td class="num">31.12.2100</td><td>Zásilky malé hodnoty</td><td class="num">0,00</td></tr>
        </tbody>
      </table>
      </div>
      <div class="sbar d-flex flex-column"><svg class="d-block"><use href="#arup"/></svg><span class="flex-fill"></span><i></i><span class="flex-fill"></span><svg class="d-block"><use href="#caret"/></svg></div>
    </div>
    <div class="foot"><span></span></div>
  </div>
  <div class="stat first keys d-flex"><span>1-Pomoc</span><span>2-</span><span>3-Obnov</span><span>4-Záznam</span><span>5-Změna</span><span>6-Kopie</span><span>7-</span><span>8-</span><span>9-Tisk</span><span>10-Menu</span></div>
  <div class="stat d-flex"><span class="a60">Kniha</span><span class="a42"></span><span class="a40">2014</span><span class="a41 off">PŘES</span><span class="a40"></span><span class="a84"></span><span class="a41"></span><span class="a82">DEMO</span><span class="a40"></span><span class="a92">implicitní</span><svg class="sz"><use href="#sizer"/></svg></div>
</section>
<div class="redline position-absolute"></div>
<div class="redbox position-absolute"></div>
</main>
<script src="https://cdn.jsdelivr.net/npm/bootstrap@5.3.0/dist/js/bootstrap.bundle.min.js"></script>
</body>
</html>
